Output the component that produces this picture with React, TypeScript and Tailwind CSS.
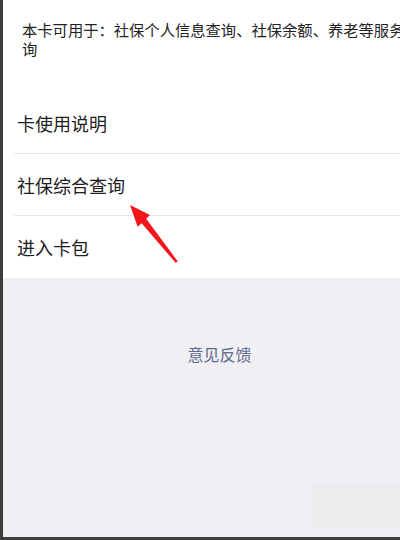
import React from "react";

const font = { fontFamily: '"Noto Sans CJK SC", "Noto Sans", sans-serif' };

function Row({ label, line }: { label: string; line: boolean }) {
  return (
    <div className={`ml-[11px] h-[62px] flex items-center ${line ? "border-b border-[#e6e6e6]" : ""}`}>
      <span className="pl-[3px] text-[18px] leading-none text-[#1c1c1c]">{label}</span>
    </div>
  );
}

export default function App() {
  return (
    <div
      className="relative w-[400px] h-[540px] flex flex-col bg-white border-l-[3px] border-b-[3px] border-[#3e3e3e] overflow-hidden"
      style={font}
    >
      <div className="h-[92px] pt-[20px] pl-[19px] text-[15.3px] leading-[19px] text-[#222] whitespace-nowrap overflow-hidden">
        <div>本卡可用于：社保个人信息查询、社保余额、养老等服务查</div>
        <div>询</div>
      </div>
      <Row label="卡使用说明" line />
      <Row label="社保综合查询" line />
      <Row label="进入卡包" line={false} />
      <div className="flex-1 bg-[#efeff4] flex justify-center pt-[66px] pl-[36px] relative">
        <span className="text-[16px] leading-[20px] text-[#5d6a8c]">意见反馈</span>
        <div className="absolute right-0 bottom-[8px] w-[88px] h-[46px] bg-[#ececef] rounded-sm" />
      </div>
      <svg
        className="absolute left-0 top-0 pointer-events-none"
        width="400"
        height="540"
        viewBox="0 0 400 540"
      >
        <polygon
          points="127,205 147,215 143.2,218.8 174.8,261.4 172.6,262.8 138.6,223.2 134.6,226.8"
          fill="#f2151b"
        />
      </svg>
    </div>
  );
}
